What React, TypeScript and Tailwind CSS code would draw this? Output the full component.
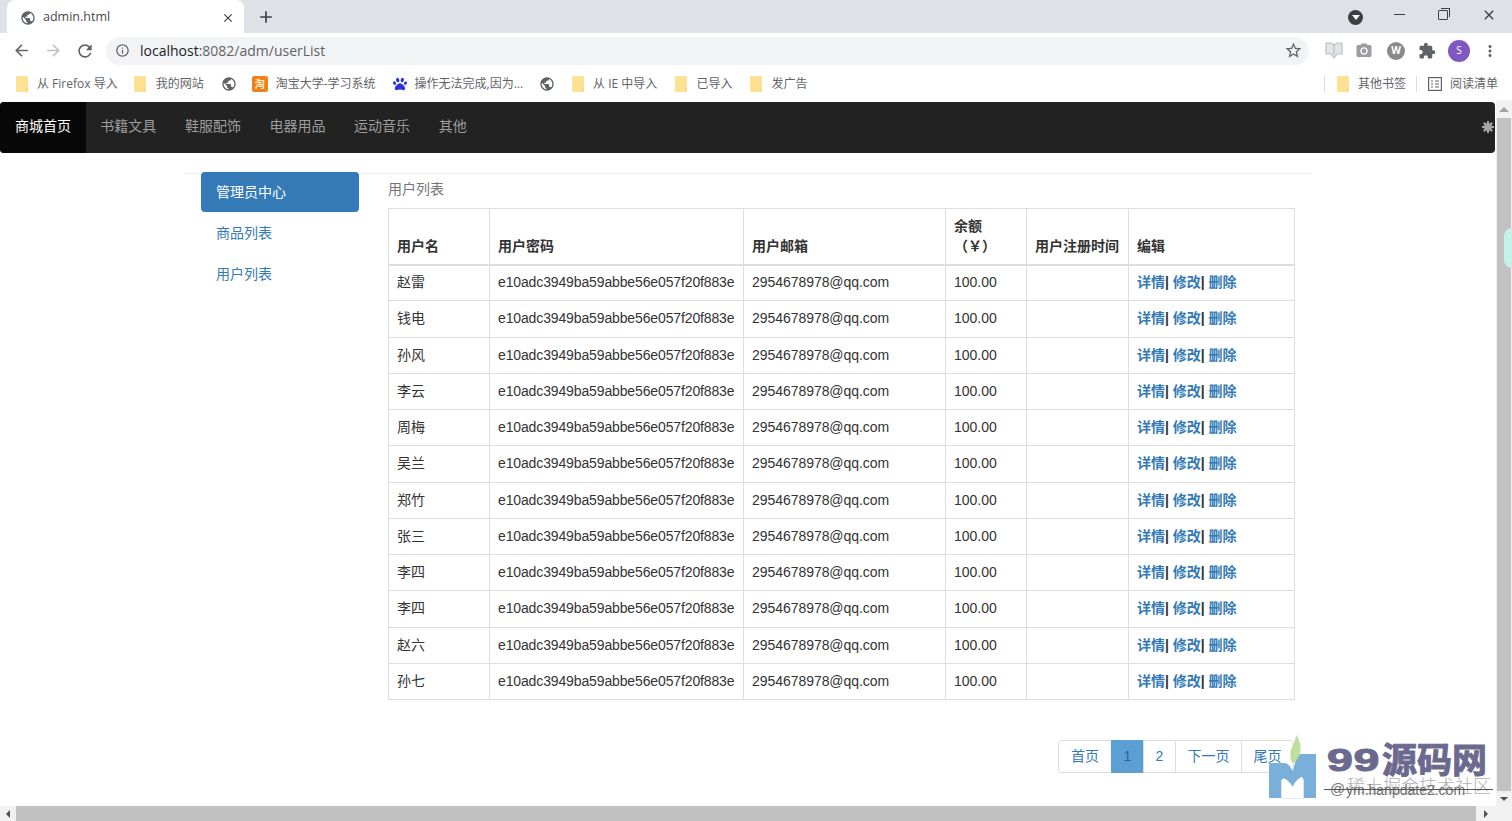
import React from "react";
import {
  MdAdd,
  MdArrowBack,
  MdArrowForward,
  MdClose,
  MdExtension,
  MdInfoOutline,
  MdMoreVert,
  MdPhotoCamera,
  MdPublic,
  MdRefresh,
  MdStarBorder,
} from "react-icons/md";
import { FaPaw } from "react-icons/fa";

const users = ["赵雷", "钱电", "孙风", "李云", "周梅", "吴兰", "郑竹", "张三", "李四", "李四", "赵六", "孙七"];
const font = "font-['Liberation_Sans','Noto_Sans_CJK_SC',sans-serif]";

function Folder() {
  return (
    <svg width="12" height="16" viewBox="0 0 12 16" className="shrink-0">
      <rect width="12" height="16" rx="1" fill="#fde293" />
      <path d="M10 16V12.5h2" fill="#f5cf6c" />
    </svg>
  );
}

function Bookmark({
  icon,
  label,
  gap = "ml-[9px]",
  className = "",
}: {
  icon: React.ReactNode;
  label?: string;
  gap?: string;
  className?: string;
}) {
  return (
    <div className={`flex items-center shrink-0 ${className}`}>
      {icon}
      {label && <span className={`${gap} text-[12px] text-[#5f6368] whitespace-nowrap`}>{label}</span>}
    </div>
  );
}

function BrowserChrome() {
  return (
    <div className={`shrink-0 font-['Open_Sans','Noto_Sans_CJK_SC',sans-serif]`}>
      <div className="h-[33px] bg-[#dee1e6] flex items-end pl-[7px]">
        <div className="w-[237px] h-[33px] pt-[2px] bg-white rounded-t-lg flex items-center pl-[13px] pr-[9px]">
          <MdPublic size={16} className="text-[#5f6368]" />
          <span className="ml-[7px] text-[12.5px] text-[#45494d]">admin.html</span>
          <MdClose size={14} className="ml-auto text-[#3c4043]" />
        </div>
        <MdAdd size={20} className="ml-[12px] mb-[6px] text-[#3c4043]" />
        <div className="ml-auto self-stretch flex items-center">
          <div className="w-[15px] h-[15px] rounded-full bg-[#3c4043] flex items-center justify-center mt-[1px]">
            <div className="w-0 h-0 border-x-[4px] border-x-transparent border-t-[5px] border-t-white" />
          </div>
          <div className="ml-[31px] w-[11px] h-px bg-[#3c4043] mb-[4px]" />
          <div className="ml-[33px] mb-[3px] relative w-[10px] h-[10px] border border-[#3c4043] rounded-[1px]">
            <div className="absolute -top-[3px] -right-[3px] w-[9px] h-[9px] border-t border-r border-[#3c4043]" />
          </div>
          <MdClose size={16} className="ml-[33px] mr-[15px] mb-[3px] text-[#3c4043]" />
        </div>
      </div>
      <div className="h-[33px] pt-[2px] bg-white flex items-center pl-[12px]">
        <MdArrowBack size={19} className="text-[#5f6368]" />
        <MdArrowForward size={19} className="ml-[13px] text-[#bdc1c6]" />
        <MdRefresh size={20} className="ml-[12px] text-[#5f6368]" />
        <div className="ml-[11px] w-[1203px] h-[28px] rounded-full bg-[#f1f3f4] flex items-center pl-[9px] pr-[6px]">
          <MdInfoOutline size={15} className="text-[#5f6368]" />
          <span className="ml-[10px] text-[14px] text-[#202124]">
            localhost<span className="text-[#5f6368]">:8082/adm/userList</span>
          </span>
          <MdStarBorder size={19} className="ml-auto text-[#5f6368]" />
        </div>
        <svg width="18" height="17" viewBox="0 0 18 17" className="ml-[16px]">
          <path
            d="M1 1h5l3 2 3-2h5v11h-5l-3 4-3-4H1z"
            fill="#e3e4e6"
            stroke="#bcbfc3"
            strokeWidth="1.2"
            strokeLinejoin="round"
          />
          <path d="M9 3v10" stroke="#bcbfc3" strokeWidth="1.2" />
        </svg>
        <MdPhotoCamera size={18} className="ml-[12px] text-[#9b9da0]" />
        <div className="ml-[14px] w-[18px] h-[18px] rounded-full bg-[#8a8a8a] text-white text-[10px] font-bold flex items-center justify-center">
          W
        </div>
        <MdExtension size={18} className="ml-[13px] text-[#5f6368]" />
        <div className="ml-[12px] w-[22px] h-[22px] rounded-full bg-[#7e57c2] text-white text-[10px] flex items-center justify-center">
          S
        </div>
        <MdMoreVert size={18} className="ml-[11px] text-[#5f6368]" />
      </div>
      <div className="h-[34px] pt-[2px] bg-white flex items-center pl-[16px] pr-[14px] gap-[17px]">
        <Bookmark icon={<Folder />} label="从 Firefox 导入" />
        <Bookmark icon={<Folder />} label="我的网站" className="-ml-[1px]" gap="ml-[10px]" />
        <Bookmark icon={<MdPublic size={16} className="text-[#5f6368]" />} />
        <Bookmark
          className="-ml-[2px]"
          icon={
            <div className="w-[16px] h-[16px] bg-[#f0801c] rounded-[2px] text-[#fff3c4] text-[10px] leading-none font-bold flex items-center justify-center">
              淘
            </div>
          }
          label="淘宝大学-学习系统"
          gap="ml-[8px]"
        />
        <Bookmark icon={<FaPaw size={14} className="text-[#2932e1]" />} label="操作无法完成,因为..." gap="ml-[8px]" />
        <Bookmark className="-ml-[1px]" icon={<MdPublic size={16} className="text-[#5f6368]" />} />
        <Bookmark icon={<Folder />} label="从 IE 中导入" />
        <Bookmark className="ml-[1px]" icon={<Folder />} label="已导入" />
        <Bookmark className="ml-[1px]" icon={<Folder />} label="发广告" />
        <div className="ml-auto w-px h-[16px] bg-[#dadce0]" />
        <div className="-ml-[5px]">
          <Bookmark icon={<Folder />} label="其他书签" />
        </div>
        <div className="-ml-[7px] w-px h-[16px] bg-[#dadce0]" />
        <div className="-ml-[6px]">
          <Bookmark
            icon={
              <svg width="14" height="14" viewBox="0 0 14 14" fill="none" stroke="#5f6368" strokeWidth="1.2">
                <rect x="0.6" y="0.6" width="12.8" height="12.8" />
                <path d="M3 4h2M3 7h2M3 10h2M7 4h4M7 7h4M7 10h4" />
              </svg>
            }
            label="阅读清单"
            gap="ml-[8px]"
          />
        </div>
      </div>
    </div>
  );
}

function Navbar() {
  const items = ["书籍文具", "鞋服配饰", "电器用品", "运动音乐", "其他"];
  return (
    <nav className="mt-[2px] h-[51px] pb-[2px] w-[1495px] bg-[#222222] rounded-[4px] flex items-stretch text-[14px] text-[#9d9d9d]">
      <a className="w-[86px] -mb-[2px] pb-[2px] bg-[#080808] rounded-l-[4px] text-white flex items-center justify-center">
        商城首页
      </a>
      {items.map((item) => (
        <a key={item} className="px-[14.3px] flex items-center">
          {item}
        </a>
      ))}
      <svg width="12" height="12" viewBox="0 0 12 12" className="ml-auto mr-[1px] self-center">
        <circle cx="6" cy="6" r="4" fill="#a5a5a5" />
        <path d="M6 0v12M0 6h12M1.800 1.800l8.400 8.400M10.200 1.800l-8.400 8.400" stroke="#a5a5a5" strokeWidth="2" />
      </svg>
    </nav>
  );
}

function Sidebar() {
  return (
    <aside className="w-[158px] ml-[15px] -mt-[2px] shrink-0 text-[14px]">
      <a className="h-[40px] flex items-center pl-[15px] bg-[#337ab7] text-white rounded-[4px]">管理员中心</a>
      <a className="mt-[1px] h-[41px] flex items-center pl-[15px] text-[#337ab7]">商品列表</a>
      <a className="h-[41px] flex items-center pl-[15px] text-[#337ab7]">用户列表</a>
    </aside>
  );
}

function UserTable() {
  const cell = "border border-[#dddddd] px-[8px] align-middle";
  const head =
    "border border-[#dddddd] border-b-2 px-[8px] pb-[8px] align-bottom text-left font-bold leading-[20px] text-[#333333]";
  return (
    <table className="table-fixed w-[906px] border-collapse text-[14px] text-[#333333]">
      <colgroup>
        <col className="w-[101px]" />
        <col className="w-[254px]" />
        <col className="w-[202px]" />
        <col className="w-[81px]" />
        <col className="w-[102px]" />
        <col className="w-[166px]" />
      </colgroup>
      <thead>
        <tr className="h-[56px]">
          <th className={head}>用户名</th>
          <th className={head}>用户密码</th>
          <th className={head}>用户邮箱</th>
          <th className={head}>
            余额
            <br />
            （￥）
          </th>
          <th className={head}>用户注册时间</th>
          <th className={head}>编辑</th>
        </tr>
      </thead>
      <tbody>
        {users.map((name, i) => (
          <tr key={i} className="h-[36.25px]">
            <td className={cell}>{name}</td>
            <td className={`${cell} tracking-[-0.13px]`}>e10adc3949ba59abbe56e057f20f883e</td>
            <td className={`${cell} tracking-[-0.05px]`}>2954678978@qq.com</td>
            <td className={cell}>100.00</td>
            <td className={cell}></td>
            <td className={`${cell} font-bold text-[#337ab7] whitespace-nowrap`}>
              详情<span className="text-[#333333]">|</span> 修改<span className="text-[#333333]">|</span> 删除
            </td>
          </tr>
        ))}
      </tbody>
    </table>
  );
}

function Pagination() {
  const base = "h-[33px] flex items-center justify-center border border-[#dddddd] -ml-px text-[#337ab7] bg-white";
  return (
    <ul className="mt-[40px] w-[906px] flex justify-end text-[14px]">
      <li className={`${base} w-[54px] ml-0 rounded-l-[4px]`}>首页</li>
      <li className="h-[33px] w-[33px] -ml-px flex items-center justify-center bg-[#5ba0d3] text-[#2a6496]">1</li>
      <li className={`${base} w-[33px]`}>2</li>
      <li className={`${base} w-[67px]`}>下一页</li>
      <li className={`${base} w-[53px] rounded-r-[4px]`}>尾页</li>
    </ul>
  );
}

function Watermark() {
  return (
    <div className="absolute left-[1268px] top-[734px] w-[226px] h-[66px] pointer-events-none">
      <svg width="50" height="66" viewBox="0 0 50 66" className="absolute left-0 top-0">
        <path
          fillRule="evenodd"
          d="M1 29h15c4 0 6 3 9 8 2-9 4-17 8-17h15v44H1zM13.300 64.300V46l2.400-1.700c3 1 6 4 9 8.400 2-4.500 5-8 9.300-10l1.700 3.300v18.300z"
          fill="#6fa8d6"
          opacity="0.92"
        />
        <path
          d="M28.300 1c3.500 5 5 11 4 17-.6 4.500-3.500 9-7 11.300-2.500-2-3.500-6-3-10 .5-5 4-10 6-18.300z"
          fill="#b5d98b"
          opacity="0.85"
        />
      </svg>
      <div className="absolute left-[59px] top-[8px] flex items-center h-[36px] text-[#6b6a8e] whitespace-nowrap [-webkit-text-stroke:1px_#6b6a8e]">
        <span className="w-[55px] inline-block origin-left scale-x-150 text-[31px] font-bold leading-none tracking-[0.5px]">
          99
        </span>
        <span className="text-[35px] font-bold leading-none">源码网</span>
      </div>
      <div className="absolute left-[62px] top-[44px] text-[15px] leading-[22px] text-[#777777] whitespace-nowrap">@</div>
      <div className="absolute left-[79px] top-[41px] text-[18px] leading-[24px] font-light text-[#b0b0b0] whitespace-nowrap">
        稀土掘金技术社区
      </div>
      <div className="absolute left-[78px] top-[46px] text-[14px] leading-[20px] text-[#707070] whitespace-nowrap">
        ym.hanpdate2.com
      </div>
      <div className="absolute left-[56px] top-[55px] w-[169px] h-[1px] bg-[#555555]" />
    </div>
  );
}

export default function App() {
  return (
    <div className={`relative w-[1512px] h-[821px] overflow-hidden flex flex-col bg-white ${font}`}>
      <BrowserChrome />
      <div className="flex-1 min-h-0 flex">
        <main className="w-[1496px] h-[706px] overflow-hidden">
          <Navbar />
          <div className="mt-[20px] ml-[186px] w-[1124px] border-t border-[#eeeeee] flex">
            <Sidebar />
            <section className="ml-[29px]">
              <h4 className="h-[34px] pt-[5px] text-[14px] leading-[20px] text-[#777777]">用户列表</h4>
              <UserTable />
              <Pagination />
            </section>
          </div>
        </main>
        <div className="w-[16px] h-[706px] bg-[#f1f1f1] flex flex-col items-center px-px">
          <div className="h-[18px] flex items-center">
            <div className="w-0 h-0 border-x-[5px] border-x-transparent border-b-[5px] border-b-[#a3a3a3]" />
          </div>
          <div className="w-full flex-1 bg-[#c1c1c1]" />
          <div className="h-[15px] flex items-center">
            <div className="w-0 h-0 border-x-[4px] border-x-transparent border-t-[4px] border-t-[#505050]" />
          </div>
        </div>
      </div>
      <div className="h-[15px] shrink-0 bg-[#f1f1f1] flex items-center">
        <div className="w-[16px] flex justify-center">
          <div className="w-0 h-0 border-y-[4px] border-y-transparent border-r-[4px] border-r-[#505050]" />
        </div>
        <div className="w-[1460px] h-full bg-[#c1c1c1]" />
        <div className="w-[20px] flex justify-center">
          <div className="w-0 h-0 border-y-[4px] border-y-transparent border-l-[4px] border-l-[#505050]" />
        </div>
      </div>
      <div className="absolute right-0 top-[228px] w-[8px] h-[40px] rounded-l-full bg-[#c5f2e8]" />
      <Watermark />
    </div>
  );
}
